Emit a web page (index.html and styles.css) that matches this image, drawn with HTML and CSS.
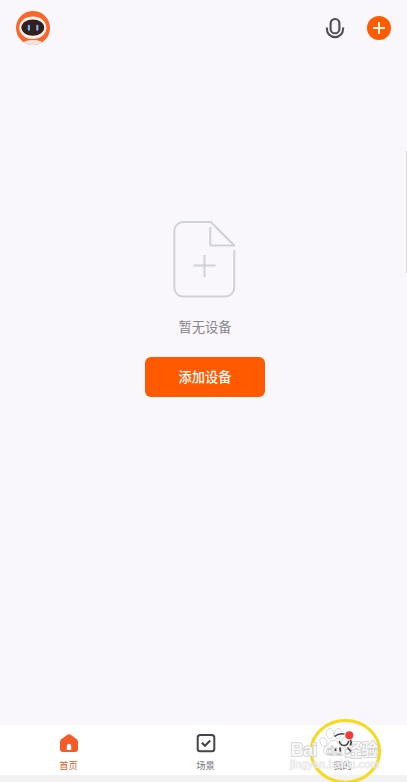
FILE: index.html
```html
<!DOCTYPE html>
<html lang="zh-CN">
<head>
  <meta charset="UTF-8">
  <meta name="viewport" content="width=device-width, initial-scale=1.0">
  <title>首页</title>
  <link rel="stylesheet" href="styles.css">
</head>
<body>
  <!-- Top Bar -->
  <header class="top-bar">
    <svg class="avatar" viewBox="0 0 36 36">
      <defs><clipPath id="face"><circle cx="18" cy="18" r="17"/></clipPath></defs>
      <g clip-path="url(#face)">
        <rect width="36" height="36" fill="#f9652b"/>
        <ellipse cx="18" cy="34.500" rx="11" ry="4.600" fill="#f5e3e0"/>
        <ellipse cx="17.800" cy="17.800" rx="13.600" ry="11.300" fill="#fff1ea"/>
        <ellipse cx="17.800" cy="17.600" rx="11.400" ry="8.200" fill="#30211f"/>
        <rect x="12.800" y="14.800" width="2.200" height="6" rx="1" fill="#7daef5"/>
        <rect x="21.200" y="14.800" width="2.200" height="6" rx="1" fill="#7daef5"/>
      </g>
    </svg>
    <div class="top-icons">
      <svg class="mic" viewBox="0 0 20 22">
        <rect x="5.600" y="2" width="8.800" height="14.300" rx="4.400"/>
        <path d="M1.900 10.500v1.500a8.100 8.100 0 0 0 16.200 0v-1.500"/>
      </svg>
      <svg class="plus" viewBox="0 0 24 24">
        <circle cx="12" cy="12" r="12"/>
        <path d="M6 12h12M12 6v12"/>
      </svg>
    </div>
  </header>

  <!-- Empty state -->
  <main class="empty">
    <svg class="doc" viewBox="0 0 64 78">
      <path d="M62.300 30v37.500a9 9 0 0 1-9 9H11.300a9 9 0 0 1-9-9V11a9 9 0 0 1 9-9h27.500L62.300 25.500H38.300V7"/>
      <path d="M21.500 45.500h22M32.500 35v22"/>
    </svg>
    <p class="label">暂无设备</p>
    <button class="add-btn">添加设备</button>
  </main>
  <div class="scrollbar"></div>

  <!-- Tabs -->
  <nav class="tabs">
    <a class="tab active">
      <svg viewBox="0 0 20 20">
        <path d="M1 9Q1 7.300 2.300 6.300L8 2Q10 .6 12 2l5.700 4.300Q19 7.300 19 9v7q0 3-3 3H4q-3 0-3-3z" fill="#f55a27"/>
        <path d="M7.800 17v-4a2.200 2.200 0 0 1 4.400 0v4z" fill="#fff"/>
      </svg>
      <span>首页</span>
    </a>
    <a class="tab">
      <svg viewBox="0 0 20 20" class="line">
        <rect x="1.700" y="1.900" width="16.600" height="16.300" rx="2.500"/>
        <path d="M5.800 9.800l3.200 3 5.200-5.300"/>
      </svg>
      <span>场景</span>
    </a>
    <a class="tab">
      <svg viewBox="0 0 20 20" class="line"></svg>
      <span>我的</span>
    </a>
  </nav>
  <div class="bottom-edge"></div>

  <!-- Watermark and highlight -->
  <svg class="overlay" viewBox="0 0 127 72">
    <ellipse class="ring" cx="65.300" cy="41.400" rx="34.300" ry="30.800"/>
    <g class="mark">
      <text x="10.500" y="45.500" class="brand" textLength="27">Bai</text>
      <text x="65" y="45.500" class="brand cn" textLength="33">经验</text>
      <text x="10" y="57.500" class="url" textLength="89">jingyan.baidu.com</text>
      <ellipse cx="43.500" cy="32" rx="3.300" ry="4.600" transform="rotate(-20 43.500 32)"/>
      <ellipse cx="50" cy="23.500" rx="3.600" ry="5"/>
      <ellipse cx="58" cy="23.500" rx="3.600" ry="5" transform="rotate(12 58 23.500)"/>
      <ellipse cx="65" cy="31" rx="3.300" ry="4.600" transform="rotate(25 65 31)"/>
      <path d="M54 30q-4 0-6 5-6 4-4 8 2 3 10 2 9 2 11-2 1-4-5-7-2-6-6-6z"/>
      <text x="46" y="44.500" class="du" textLength="16">du</text>
    </g>
    <!-- Profile tab icon, showing through the watermark -->
    <g class="person">
      <path d="M54.500 26.500q4-3.500 10-2.500M59.300 31q.5 4 4.500 4.500 4 0 5-4.500M70.500 29.500q1.500 3 0 6"/>
      <path d="M55.500 38.500v2.500M59.800 37.500l.7 4M67.500 37.500l3.500 4"/>
    </g>
    <circle class="dot" cx="69.300" cy="25.200" r="4"/>
  </svg>
</body>
</html>
```

FILE: styles.css
```css
* { box-sizing: border-box; }

body {
  margin: 0;
  height: 782px;
  display: flex;
  flex-direction: column;
  overflow: hidden;
  position: relative;
  background: #f9f7fb;
  font-family: "Noto Sans CJK SC", sans-serif;
}

.top-bar {
  height: 56px;
  padding: 0 16px 0 15px;
  display: flex;
  align-items: center;
  justify-content: space-between;
}

.avatar {
  width: 36px;
  height: 36px;
}

.top-icons {
  display: flex;
  align-items: center;
  gap: 22px;
}

.mic {
  width: 20px;
  height: 22px;
  fill: none;
  stroke: #4f4d54;
  stroke-width: 2.1;
}

.plus {
  width: 24px;
  height: 24px;
  fill: #ff5b00;
}

.plus path {
  stroke: #fff3e4;
  stroke-width: 2;
}

.empty {
  flex: 1;
  padding-top: 164px;
  padding-left: 3px;
  display: flex;
  flex-direction: column;
  align-items: center;
}

.doc {
  width: 64px;
  height: 78px;
  margin-right: 2px;
  fill: none;
  stroke: #d0d2d8;
  stroke-width: 2;
  stroke-linejoin: round;
}

.label {
  margin: 19px 0 20px;
  font-size: 13.3px;
  line-height: 20px;
  color: #88868c;
}

.add-btn {
  width: 120px;
  height: 40px;
  padding: 0 0 2px;
  border: none;
  border-radius: 6px;
  background: #ff5a00;
  color: #fff;
  font: 500 13.3px "Noto Sans CJK SC", sans-serif;
}

.scrollbar {
  position: absolute;
  top: 151px;
  right: 0;
  width: 1px;
  height: 122px;
  background: #dcdadd;
}

.tabs {
  height: 50px;
  padding-left: 4px;
  display: flex;
  justify-content: center;
  background: #fff;
}

.tab {
  width: 137px;
  flex: none;
  padding-top: 8px;
  display: flex;
  flex-direction: column;
  align-items: center;
  font-size: 9.3px;
  line-height: 14px;
  color: #77757a;
}

.tab svg {
  width: 20px;
  height: 20px;
  margin-bottom: 5px;
}

.tab.active {
  color: #e8612f;
}

.line {
  fill: none;
  stroke: #454347;
  stroke-width: 2;
}

.bottom-edge {
  height: 7px;
  background: #f2f2f2;
}

.overlay {
  position: absolute;
  left: 280px;
  top: 710px;
  width: 127px;
  height: 72px;
}

.ring {
  fill: none;
  stroke: #f6da1c;
  stroke-width: 3;
}

.mark {
  fill: #fff;
  fill-opacity: 0.8;
  stroke: #d2d2d2;
  stroke-width: 0.8;
}

.brand {
  font: bold 18.5px "Liberation Sans", sans-serif;
  stroke-width: 1.6;
  paint-order: stroke;
}

.cn {
  font: bold 16.5px "Noto Sans CJK SC", sans-serif;
}

.du {
  font: bold 13px "Liberation Sans", sans-serif;
  stroke: #c8c8c8;
}

.url {
  font: 10.5px "Liberation Sans", sans-serif;
  stroke: #dedede;
  stroke-width: 1;
  stroke-opacity: 0.8;
  fill-opacity: 0.5;
  paint-order: stroke;
}

.person {
  fill: none;
  stroke: #4a484c;
  stroke-width: 1.6;
}

.dot {
  fill: #f33b35;
}
```
